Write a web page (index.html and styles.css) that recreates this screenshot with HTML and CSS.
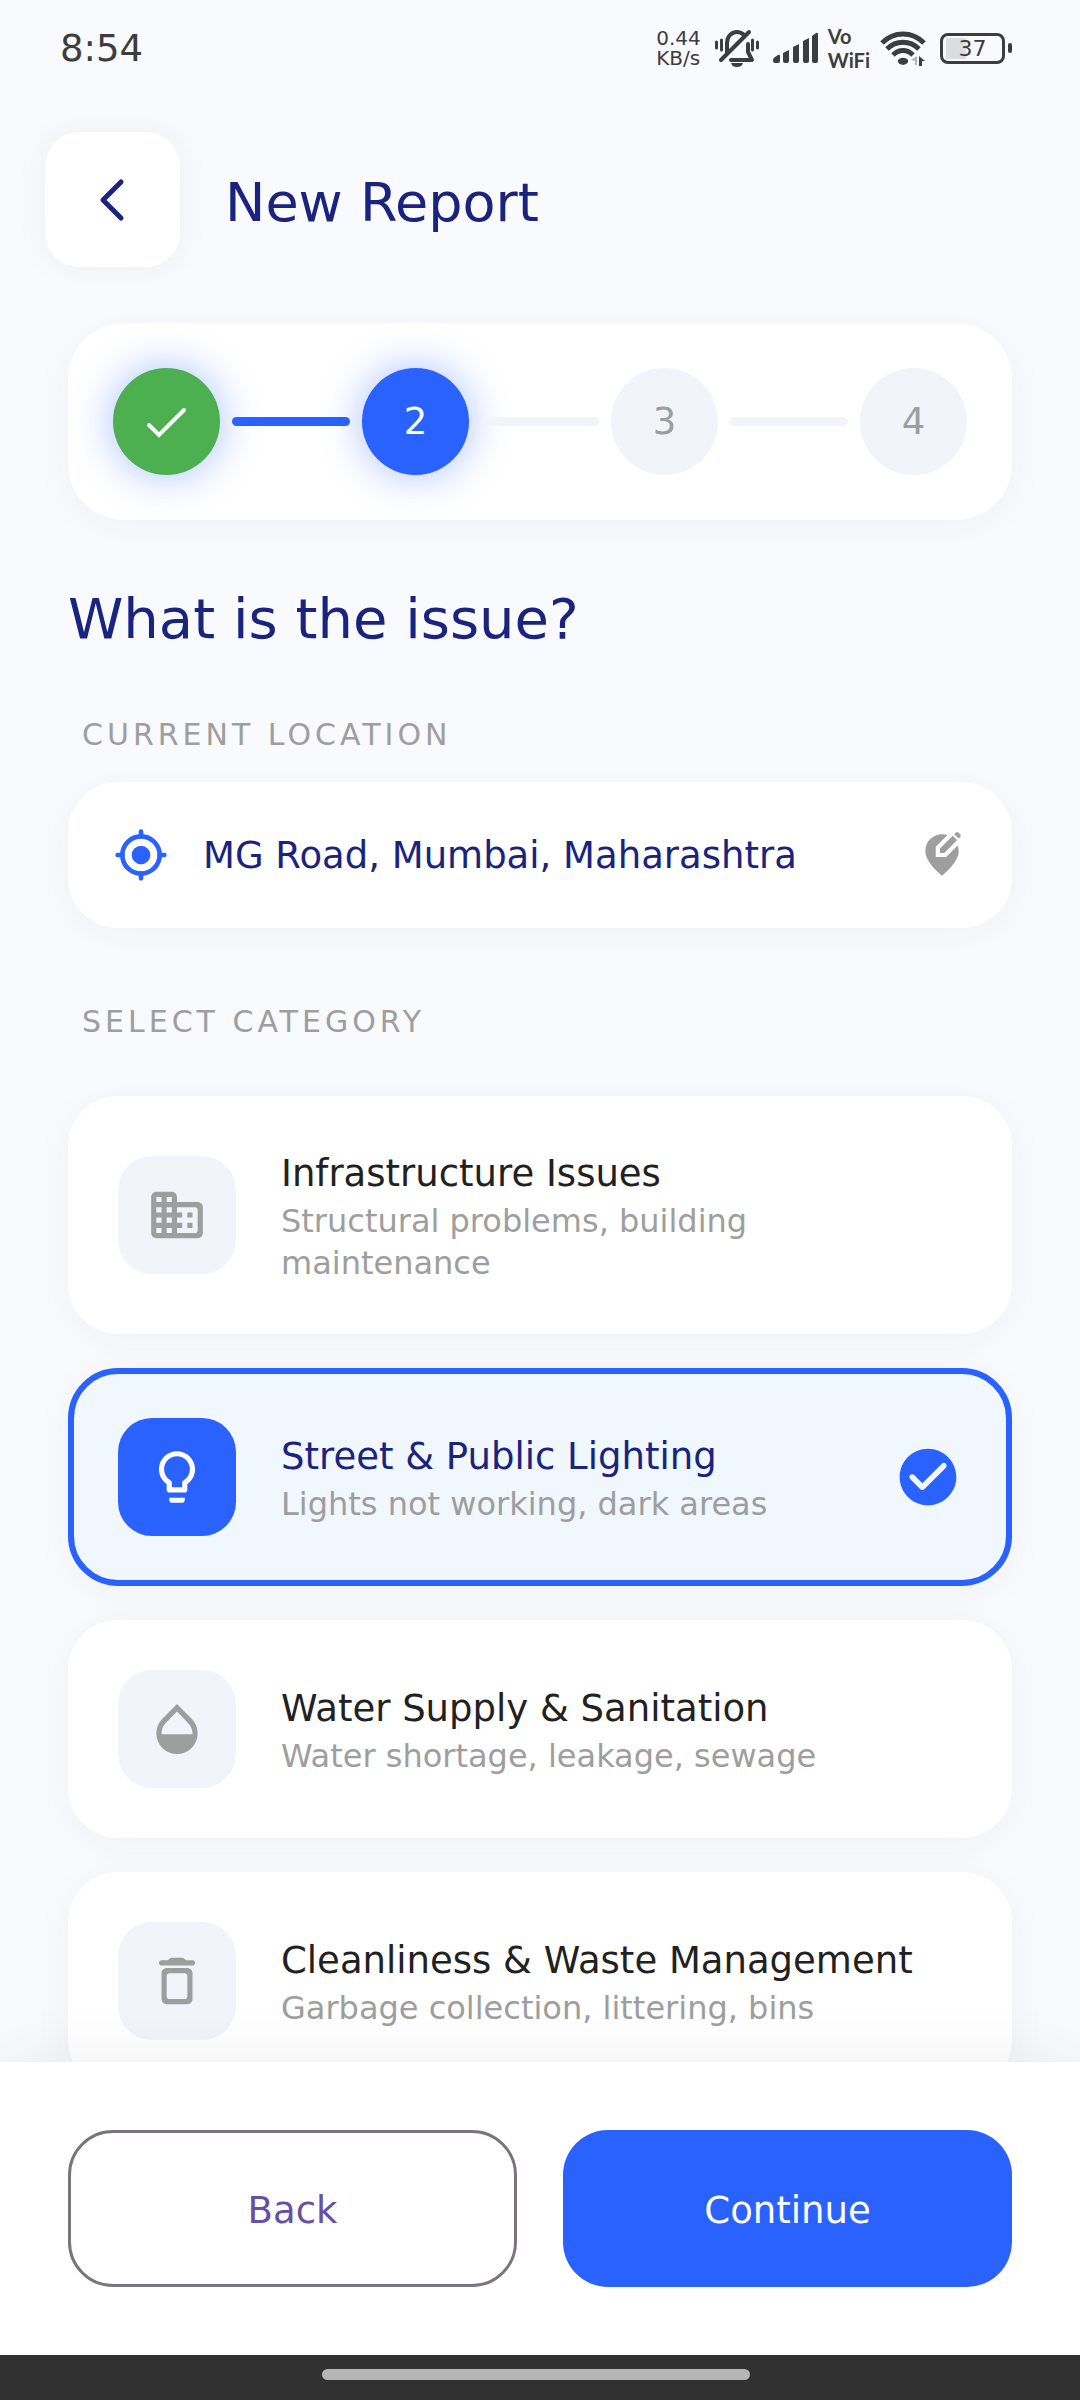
FILE: index.html
```html
<!DOCTYPE html>
<html lang="en">
<head>
<meta charset="utf-8">
<meta name="viewport" content="width=device-width, initial-scale=1">
<title>New Report</title>
<link rel="stylesheet" href="styles.css">
</head>
<body>
<div class="status-bar">
  <span class="clock">8:54</span>
  <div class="status-icons">
    <span class="net-speed">0.44<br>KB/s</span>
    <svg class="ico-bell" viewBox="0 0 44 40" aria-hidden="true">
      <g fill="none" stroke="#3c3d3e" stroke-width="4" stroke-linecap="round" stroke-linejoin="round">
        <path d="M12 25V15c0-6 4-11 10-11 3 0 5 1 7 3"/>
        <path d="M33 16v8l4 8H16"/>
        <path d="M6 32 34 4"/>
      </g>
      <path d="M16 35h12c-1 3-3 4-6 4s-5-1-6-4z" fill="#3c3d3e"/>
      <path d="M1.500 14v6M6.500 12v10M37.500 12v10M42.500 14v6" stroke="#3c3d3e" stroke-width="3" stroke-linecap="round"/>
    </svg>
    <svg class="ico-signal" viewBox="0 0 46 32" fill="#3c3d3e" aria-hidden="true">
      <path d="M0 28q0-2 2-3l3-2q2-1 2 1v5q0 2-2 2H2q-2 0-2-2z"/>
      <path d="M10 21l6-3v11q0 2-2 2h-2q-2 0-2-2z"/>
      <path d="M20 15l6-3v17q0 2-2 2h-2q-2 0-2-2z"/>
      <path d="M30 9l6-3v23q0 2-2 2h-2q-2 0-2-2z"/>
      <path d="M39 4l4-3q2-1 2 1v27q0 2-2 2h-2q-2 0-2-2z"/>
    </svg>
    <span class="vowifi">Vo<br>WiFi</span>
    <svg class="ico-wifi" viewBox="0 0 46 36" aria-hidden="true">
      <g fill="none" stroke="#3c3d3e" stroke-width="5">
        <path d="M2 13C14 1 32 1 44 13"/>
        <path d="M7 19C16 10 30 10 39 19"/>
        <path d="M13 25C19 19 27 19 33 25"/>
      </g>
      <path d="M18 30c3-3 7-3 10 0q1 4-5 5-6-1-5-5z" fill="#3c3d3e"/>
      <path d="M31 30l6-4v9h-2v-4z" fill="#b4b5b6"/>
      <path d="M39 26l6 5h-3v5h-3z" fill="#3c3d3e"/>
    </svg>
    <span class="battery"><span class="battery-level">37</span></span>
  </div>
</div>

<header class="app-header">
  <button class="back-btn" type="button" aria-label="Go back">
    <svg viewBox="0 0 56 56" aria-hidden="true"><path d="M36 10 18 28l18 18" fill="none" stroke="#1a237e" stroke-width="5" stroke-linecap="round" stroke-linejoin="round"/></svg>
  </button>
  <h1>New Report</h1>
</header>

<main class="content">
  <ol class="stepper card">
    <li class="step done" aria-label="Step 1, done"><svg viewBox="0 0 56 56" aria-hidden="true"><path d="M10 31l10 10 25-25" fill="none" stroke="#fff" stroke-width="4" stroke-linecap="round"/></svg></li>
    <li class="line active" aria-hidden="true"></li>
    <li class="step current" aria-current="step">2</li>
    <li class="line" aria-hidden="true"></li>
    <li class="step">3</li>
    <li class="line" aria-hidden="true"></li>
    <li class="step">4</li>
  </ol>

  <h2>What is the issue?</h2>

  <h3 class="section-label">CURRENT LOCATION</h3>
  <button class="location card" type="button">
    <svg class="ico-gps" viewBox="0 0 24 24" aria-hidden="true">
      <circle cx="12" cy="12" r="4" fill="#2962ff"/>
      <circle cx="12" cy="12" r="8" fill="none" stroke="#2962ff" stroke-width="2"/>
      <path d="M12 2v2M12 20v2M2 12h2M20 12h2" stroke="#2962ff" stroke-width="2" stroke-linecap="round"/>
    </svg>
    <span class="location-text">MG Road, Mumbai, Maharashtra</span>
    <svg class="ico-edit" viewBox="0 0 24 24" fill="#9e9e9e" aria-hidden="true">
      <path d="M13.950 13H9V8.050l5.610-5.610C13.780 2.160 12.900 2 12 2c-4.200 0-8 3.220-8 8.200 0 3.320 2.670 7.250 8 11.800 5.330-4.550 8-8.480 8-11.800 0-1.010-.160-1.940-.450-2.800L13.950 13z"/>
      <path d="M11 11h2.120l6.160-6.160-2.120-2.120L11 8.880V11z"/>
      <path d="M20.710 2L20 1.290C19.800 1.100 19.550 1 19.290 1c-.130 0-.480.070-.710.290l-.720.720 2.120 2.120.720-.720c.400-.390.400-1.020.010-1.410z"/>
    </svg>
  </button>

  <h3 class="section-label category-label">SELECT CATEGORY</h3>
  <div class="categories" role="radiogroup" aria-label="Select category">
    <label class="category card">
      <span class="category-icon"><svg viewBox="0 0 24 24" aria-hidden="true"><path d="M12 7V5c0-1.100-.900-2-2-2H4c-1.100 0-2 .900-2 2v14c0 1.100.900 2 2 2h16c1.100 0 2-.900 2-2V9c0-1.100-.900-2-2-2h-8zM6 19H4v-2h2v2zm0-4H4v-2h2v2zm0-4H4V9h2v2zm0-4H4V5h2v2zm4 12H8v-2h2v2zm0-4H8v-2h2v2zm0-4H8V9h2v2zm0-4H8V5h2v2zm9 12h-7v-2h2v-2h-2v-2h2v-2h-2V9h7c.550 0 1 .450 1 1v8c0 .550-.450 1-1 1zm-1-8h-2v2h2v-2zm0 4h-2v2h2v-2z"/></svg></span>
      <span class="category-text"><span class="category-title">Infrastructure Issues</span><span class="category-sub">Structural problems, building maintenance</span></span>
      <input type="radio" name="category">
    </label>
    <label class="category card selected">
      <span class="category-icon"><svg viewBox="0 0 24 24" aria-hidden="true"><path d="M9 21c0 .550.450 1 1 1h4c.550 0 1-.450 1-1v-1H9v1zm3-19C8.140 2 5 5.140 5 9c0 2.380 1.190 4.470 3 5.740V17c0 .550.450 1 1 1h6c.550 0 1-.450 1-1v-2.260c1.810-1.270 3-3.360 3-5.740 0-3.860-3.140-7-7-7zm2.850 11.100l-.850.600V16h-4v-2.300l-.850-.600C7.800 12.160 7 10.630 7 9c0-2.760 2.240-5 5-5s5 2.240 5 5c0 1.630-.800 3.160-2.150 4.100z"/></svg></span>
      <span class="category-text"><span class="category-title">Street &amp; Public Lighting</span><span class="category-sub">Lights not working, dark areas</span></span>
      <input type="radio" name="category" checked>
      <svg class="check" viewBox="0 0 24 24" aria-hidden="true"><path fill="#2962ff" d="M12 2C6.480 2 2 6.480 2 12s4.480 10 10 10 10-4.480 10-10S17.520 2 12 2zM9.290 16.290L5.700 12.700c-.390-.390-.390-1.020 0-1.410.390-.390 1.020-.390 1.410 0L10 14.170l6.880-6.880c.390-.390 1.020-.390 1.410 0 .390.390.390 1.020 0 1.410l-7.590 7.590c-.380.390-1.020.390-1.410 0z"/></svg>
    </label>
    <label class="category card">
      <span class="category-icon"><svg viewBox="0 0 24 24" aria-hidden="true"><path d="M17.660 8L12 2.350 6.340 8C4.780 9.560 4 11.640 4 13.640s.780 4.110 2.340 5.670 3.610 2.350 5.660 2.350 4.100-.790 5.660-2.350S20 15.640 20 13.640 19.220 9.560 17.660 8zM6 14c.010-2 .620-3.270 1.760-4.400L12 5.270l4.240 4.380C17.380 10.770 17.990 12 18 14H6z"/></svg></span>
      <span class="category-text"><span class="category-title">Water Supply &amp; Sanitation</span><span class="category-sub">Water shortage, leakage, sewage</span></span>
      <input type="radio" name="category">
    </label>
    <label class="category card">
      <span class="category-icon"><svg viewBox="0 0 24 24" aria-hidden="true"><path d="M6 19c0 1.100.900 2 2 2h8c1.100 0 2-.900 2-2V9c0-1.100-.900-2-2-2H8c-1.100 0-2 .900-2 2v10zM9 9h6c.550 0 1 .450 1 1v8c0 .550-.450 1-1 1H9c-.550 0-1-.450-1-1v-8c0-.550.450-1 1-1zm6.500-5l-.710-.710c-.180-.180-.440-.290-.700-.290H9.910c-.260 0-.520.110-.700.290L8.500 4H6c-.550 0-1 .450-1 1s.450 1 1 1h12c.550 0 1-.450 1-1s-.450-1-1-1h-2.500z"/></svg></span>
      <span class="category-text"><span class="category-title">Cleanliness &amp; Waste Management</span><span class="category-sub">Garbage collection, littering, bins</span></span>
      <input type="radio" name="category">
    </label>
  </div>
</main>

<footer class="actions">
  <button class="btn btn-outline" type="button">Back</button>
  <button class="btn btn-primary" type="button">Continue</button>
</footer>
<div class="nav-bar"><span class="nav-handle"></span></div>
</body>
</html>
```
FILE: styles.css
```css
* { box-sizing: border-box; }

body {
  margin: 0;
  height: 100vh;
  display: flex;
  flex-direction: column;
  background: #f9fafd;
  color: #212121;
  font-family: "DejaVu Sans", "Noto Sans", sans-serif;
  font-size: 37px;
}

h1, h2, h3, ol { margin: 0; padding: 0; font-weight: 400; }
button { font: inherit; cursor: pointer; }
svg { display: block; flex: none; }

/* Status bar */
.status-bar {
  display: flex;
  justify-content: space-between;
  align-items: center;
  flex: none;
  height: 96px;
  padding: 0 68px 0 60px;
  color: #3c3d3e;
}
.status-icons { display: flex; align-items: center; gap: 14px; }
.net-speed { font-size: 20px; line-height: 20px; }
.ico-bell { width: 44px; height: 40px; }
.ico-signal { width: 46px; height: 32px; }
.vowifi {
  margin-left: -5px;
  font: 700 20px/24px Lato, "Liberation Sans", sans-serif;
}
.ico-wifi { width: 46px; height: 36px; margin-left: -4px; }
.battery { display: flex; align-items: center; }
.battery::after {
  content: "";
  width: 4px;
  height: 10px;
  margin-left: 3px;
  border-radius: 2px;
  background: #3c3d3e;
}
.battery-level {
  width: 65px;
  height: 31px;
  border: 3px solid #3c3d3e;
  border-radius: 8px;
  padding: 0 3px;
  background: linear-gradient(#dcdddf, #dcdddf) 3px 2px / 20px 21px no-repeat;
  font-size: 22px;
  line-height: 26px;
  text-align: center;
}

/* Header */
.app-header {
  display: flex;
  align-items: center;
  flex: none;
  gap: 45px;
  padding: 36px 45px 56px;
}
.back-btn {
  display: grid;
  place-items: center;
  width: 135px;
  height: 135px;
  border: 0;
  border-radius: 34px;
  background: #fff;
  box-shadow: 0 0 34px rgba(0, 0, 0, .05);
}
.back-btn svg { width: 56px; height: 56px; }
h1 { padding-top: 6px; font-size: 54px; line-height: 66px; color: #1a237e; }

/* Scrolling content */
.content {
  flex: 1;
  min-height: 0;
  padding: 56px 68px 34px;
  margin-top: -56px;
  overflow-y: auto;
  scrollbar-width: none;
}
.card {
  background: #fff;
  border-radius: 50px;
  box-shadow: 0 6px 42px rgba(0, 0, 0, .04);
}

.stepper {
  display: flex;
  align-items: center;
  gap: 12px;
  padding: 45px;
  border-radius: 56px;
  list-style: none;
}
.step {
  display: grid;
  place-items: center;
  flex: none;
  width: 107px;
  height: 107px;
  border-radius: 50%;
  background: #f1f4f9;
  color: #9e9e9e;
}
.step svg { width: 56px; height: 56px; }
.done, .current { box-shadow: 0 0 42px rgba(41, 98, 255, .4); }
.done { background: #4caf50; }
.current { background: #2962ff; color: #fff; }
.line { flex: 1; height: 9px; border-radius: 5px; background: #f1f4f9; }
.line.active { background: #2962ff; }

h2 { margin-top: 66px; font-size: 56px; line-height: 66px; color: #1a237e; }

.section-label {
  margin-top: 65px;
  padding-left: 14px;
  font-size: 30px;
  line-height: 36px;
  letter-spacing: 4px;
  color: #9e9e9e;
}
.category-label { margin-top: 76px; }

.location {
  display: flex;
  align-items: center;
  width: 100%;
  margin-top: 29px;
  padding: 45px;
  border: 0;
  color: #1a237e;
  text-align: left;
}
.location-text { flex: 1; margin-left: 34px; }
.ico-gps { width: 56px; height: 56px; }
.ico-edit { width: 50px; height: 50px; }

/* Category list */
.categories { display: grid; gap: 34px; margin-top: 56px; }
.category {
  display: grid;
  grid-template-columns: 118px 1fr auto;
  align-items: center;
  padding: 50px;
}
.category-icon {
  display: grid;
  place-items: center;
  height: 118px;
  border-radius: 34px;
  background: #f1f4f9;
  fill: #9e9e9e;
}
.category-icon svg { width: 62px; height: 62px; }
.category-text { margin-left: 45px; padding-top: 2px; }
.category-title, .category-sub { display: block; }
.category-title { line-height: 52px; }
.category-sub { font-size: 32px; line-height: 42px; color: #9e9e9e; }
.category input, .check { grid-column: 3; grid-row: 1; }
.category input { width: 0; height: 68px; margin: 0; appearance: none; }
.check { width: 68px; height: 68px; }
.selected {
  padding: 44px;
  border: 6px solid #2962ff;
  background: #f0f7ff;
}
.selected .category-icon { background: #2962ff; fill: #fff; }
.selected .category-title { color: #1a237e; }

/* Bottom actions */
.actions {
  display: grid;
  grid-template-columns: 1fr 1fr;
  flex: none;
  gap: 46px;
  padding: 68px;
  background: #fff;
  box-shadow: 0 -11px 56px rgba(0, 0, 0, .05);
  z-index: 1;
}
.btn { height: 157px; padding-top: 4px; border-radius: 45px; }
.btn-outline { border: 3px solid #79747e; background: #fff; color: #6750a4; }
.btn-primary { border: 0; background: #2962ff; color: #fff; }

.nav-bar {
  display: grid;
  place-items: center;
  flex: none;
  height: 45px;
  padding: 0 8px 7px 0;
  background: #313131;
  z-index: 2;
}
.nav-handle { width: 40%; height: 11px; border-radius: 6px; background: #b6b6b6; }
```
